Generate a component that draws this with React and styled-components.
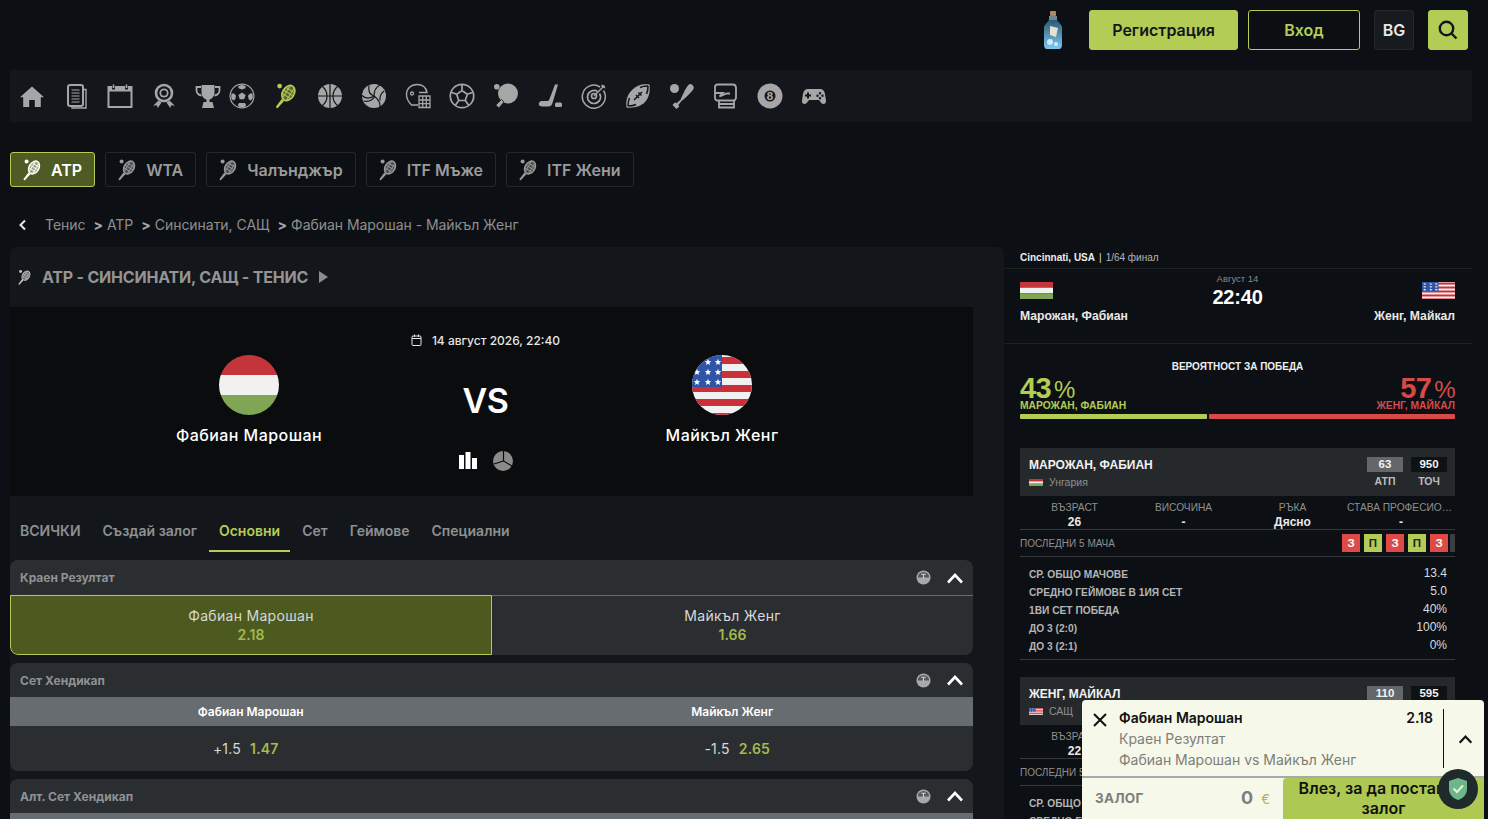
import styled, { createGlobalStyle } from 'styled-components';

const GlobalStyle = createGlobalStyle`
  html, body {
    margin: 0;
    padding: 0;
    height: 100%;
    overflow: hidden;
    background: #0c1014;
    font-family: Inter, "Liberation Sans", sans-serif;
  }
  * { box-sizing: border-box; }
`;

const LIME = '#b3cc55';

const Page = styled.div`
  position: relative;
  width: 100%;
  height: 819px;
  overflow: hidden;
  background: #0c1014;
`;

const TopBar = styled.header`
  height: 70px;
  padding: 10px 20px 0 0;
  display: flex;
  justify-content: flex-end;
  align-items: flex-start;
`;

const Bottle = styled.svg`
  width: 24px;
  height: 38px;
  margin: 1px 24px 0 0;
`;

const TopButton = styled.button`
  width: ${(p) => p.$w}px;
  height: 40px;
  margin-right: ${(p) => p.$mr}px;
  padding: 0;
  display: flex;
  align-items: center;
  justify-content: center;
  border-radius: 3px;
  border: 1px solid ${(p) => p.$border};
  background: ${(p) => p.$bg};
  color: ${(p) => p.$fg};
  font: 600 16px Inter, sans-serif;
`;

const SportNav = styled.nav`
  width: 1462px;
  height: 52px;
  margin: 0 0 0 10px;
  background: #13171b;
  display: flex;
  align-items: center;
`;

const NavItem = styled.span`
  width: 44px;
  height: 30px;
  flex: none;
  margin-right: ${(p) => p.$mr || 0}px;
  display: flex;
  align-items: center;
  justify-content: center;
  color: ${(p) => (p.$active ? LIME : '#a6a6a6')};
  svg { width: 26px; height: 26px; }
`;

const Chips = styled.div`
  margin: 30px 0 0 10px;
  display: flex;
  gap: 10px;
`;

const Chip = styled.div`
  height: 35px;
  padding: 0 12px;
  display: flex;
  align-items: center;
  gap: 10px;
  border-radius: 3px;
  border: 1px solid ${(p) => (p.$active ? LIME : '#24282c')};
  background: ${(p) => (p.$active ? '#4f5b24' : 'transparent')};
  color: ${(p) => (p.$active ? '#fff' : '#9b9b9b')};
  font-size: 16px;
  font-weight: 600;
  svg { width: 18px; height: 22px; }
`;

const Crumbs = styled.div`
  height: 60px;
  padding: 0 0 14px 18px;
  display: flex;
  align-items: flex-end;
  color: #8f8f8f;
  font-size: 14px;
  line-height: 17px;
  letter-spacing: -0.04px;
  svg { width: 9px; height: 12px; margin: 0 18px 2px 0; }
`;

const CrumbSep = styled.b`
  margin: 0 4px 0 8px;
  color: #a8a8a8;
`;

const Columns = styled.div`
  display: flex;
`;

const LeftPanel = styled.main`
  width: 994px;
  height: 572px;
  margin: 0 1px 0 10px;
  padding-right: 31px;
  background: #13171b;
  border-radius: 6px 6px 0 0;
`;

const LeagueTitle = styled.h2`
  height: 60px;
  margin: 0;
  padding-left: 8px;
  display: flex;
  align-items: center;
  color: #949494;
  font-size: 16px;
  font-weight: 700;
  letter-spacing: -0.2px;
  svg { width: 13px; height: 17px; margin-right: 11px; color: #c4c4c4; }
`;

const TitleArrow = styled.i`
  margin-left: 11px;
  border-left: 9px solid #8c8c8c;
  border-top: 6px solid transparent;
  border-bottom: 6px solid transparent;
`;

const Hero = styled.section`
  height: 189px;
  padding-left: 139px;
  display: grid;
  grid-template-columns: 200px 200px 200px;
  column-gap: 36.5px;
  background: #0a0c0e;
  color: #fff;
`;

const Team = styled.div`
  padding-top: 48px;
  display: flex;
  flex-direction: column;
  align-items: center;
  gap: 10px;
  font-size: 16px;
  font-weight: 500;
  line-height: 21px;
  letter-spacing: 0.45px;
  svg { width: 60px; height: 60px; }
`;

const HeroCenter = styled.div`
  display: flex;
  flex-direction: column;
  align-items: center;
`;

const HeroDate = styled.div`
  height: 18px;
  margin-top: 24px;
  display: flex;
  align-items: center;
  gap: 10px;
  font-size: 12px;
  font-weight: 500;
  color: #e6e6e6;
  white-space: nowrap;
  svg { width: 11px; height: 12px; }
`;

const VsMark = styled.div`
  margin-top: 32px;
  font-size: 34px;
  line-height: 40px;
  font-weight: 600;
  letter-spacing: -0.5px;
`;

const HeroIcons = styled.div`
  margin-top: 30px;
  display: flex;
  gap: 15px;
  align-items: center;
  svg { width: 20px; height: 20px; }
`;

const Tabs = styled.div`
  height: 56px;
  margin-bottom: 8px;
  padding-top: 19px;
  display: flex;
  gap: 2px;
`;

const Tab = styled.div`
  height: 37px;
  padding: 0 10px 4px;
  display: flex;
  align-items: center;
  font-size: 14px;
  font-weight: 600;
  color: ${(p) => (p.$active ? LIME : '#8d8f91')};
  border-bottom: 2px solid ${(p) => (p.$active ? LIME : 'transparent')};
`;

const Market = styled.section`
  margin-bottom: 8px;
  background: #2a2e31;
  border-radius: 8px;
  overflow: hidden;
`;

const MarketHead = styled.div`
  height: ${(p) => p.$h}px;
  padding: 0 9px 0 10px;
  display: flex;
  align-items: center;
  color: #8f9295;
  font-size: 12px;
  font-weight: 700;
`;

const Dial = styled.svg`
  width: 15px;
  height: 15px;
  margin-left: auto;
`;

const Caret = styled.svg`
  width: 18px;
  height: 12px;
  margin-left: 15px;
  color: #fff;
`;

const Outcomes = styled.div`
  display: grid;
  grid-template-columns: 482px 1fr;
  border-top: 1px solid #666a6d;
`;

const Outcome = styled.div`
  height: ${(p) => (p.$active ? 60 : 59)}px;
  margin-top: ${(p) => (p.$active ? -1 : 0)}px;
  padding-top: 10px;
  text-align: center;
  font-size: 14px;
  line-height: 19px;
  letter-spacing: 0.3px;
  color: #d6d8d9;
  background: ${(p) => (p.$active ? '#4c5a1f' : 'transparent')};
  border: ${(p) => (p.$active ? `1px solid ${LIME}` : 'none')};
  border-bottom-left-radius: ${(p) => (p.$active ? 8 : 0)}px;
`;

const Odd = styled.div`
  color: #a3ba4c;
  font-weight: 600;
  letter-spacing: 0;
`;

const HandicapHead = styled.div`
  height: 29px;
  display: grid;
  grid-template-columns: 1fr 1fr;
  align-items: center;
  background: #666c6f;
  color: #fff;
  text-align: center;
  font-size: 12px;
  font-weight: 600;
`;

const HandicapRow = styled.div`
  height: 45px;
  display: grid;
  grid-template-columns: 1fr 1fr;
  align-items: center;
  text-align: center;
  font-size: 14px;
  letter-spacing: 0.2px;
  color: #d6d8d9;
  b { margin-left: 9px; color: #a3ba4c; font-weight: 600; }
  div:first-child { padding-right: 10px; }
  div:last-child { padding-left: 10px; }
`;

const Sidebar = styled.aside`
  width: 467px;
  padding: 0 17px 0 15px;
  font-family: "Liberation Sans", Arial, sans-serif;
  color: #fff;
`;

const Bleed = styled.div`
  margin: 0 -17px 0 -15px;
  padding: 0 17px 0 15px;
  border-bottom: 1px solid #1e2225;
`;

const VenueLine = styled.div`
  height: 21px;
  padding-top: 5px;
  font-size: 10px;
  line-height: 12px;
  color: #b5b5b5;
  b { color: #ececec; font-weight: 700; }
  i { margin: 0 4px; font-style: normal; color: #ddd; }
`;

const Matchup = styled.div`
  height: 74px;
  display: grid;
  grid-template-columns: 1fr 1fr 1fr;
`;

const MatchTeam = styled.div`
  padding-top: 13px;
  display: flex;
  flex-direction: column;
  align-items: ${(p) => (p.$right ? 'flex-end' : 'flex-start')};
  gap: 9px;
  font-size: 12.2px;
  font-weight: 700;
  line-height: 16px;
  color: #e8e8e8;
  white-space: nowrap;
  svg { width: 33px; height: 17px; }
`;

const MatchTime = styled.div`
  padding-top: 4px;
  text-align: center;
  font-size: 9.5px;
  line-height: 11px;
  color: #8a8a8a;
  strong { display: block; margin-top: 3px; font-size: 20px; line-height: 20px; color: #fff; letter-spacing: -0.2px; }
`;

const ChanceTitle = styled.div`
  padding-top: 16px;
  text-align: center;
  font-size: 10px;
  font-weight: 700;
  line-height: 14px;
  color: #eee;
`;

const ChanceRow = styled.div`
  margin-top: 1px;
  height: 39px;
  display: flex;
  justify-content: space-between;
`;

const ChanceSide = styled.div`
  display: flex;
  flex-direction: column;
  align-items: ${(p) => (p.$right ? 'flex-end' : 'flex-start')};
  color: ${(p) => p.$color};
`;

const Percent = styled.div`
  height: 25px;
  font-size: 29px;
  line-height: 26px;
  font-weight: 700;
  letter-spacing: -0.6px;
  span { margin-left: 3px; font-size: 24px; font-weight: 400; }
`;

const ChanceName = styled.div`
  font-size: 10.3px;
  line-height: 11px;
  font-weight: 700;
`;

const ChanceBar = styled.div`
  height: 5px;
  margin-bottom: 29px;
  display: flex;
  gap: 2px;
`;

const BarPart = styled.div`
  height: 5px;
  border-radius: 1px;
  background: ${(p) => p.$color};
`;

const PlayerCard = styled.div`
  height: 48px;
  padding: 9px 8px 0 9px;
  display: flex;
  justify-content: space-between;
  background: #26292c;
`;

const PlayerName = styled.div`
  padding-top: 1px;
  font-size: 12px;
  line-height: 15px;
  font-weight: 700;
  color: #f2f2f2;
`;

const Country = styled.div`
  margin-top: 2px;
  display: flex;
  align-items: center;
  gap: 6px;
  font-size: 10.5px;
  line-height: 14px;
  color: #8f8f8f;
  svg { width: 14px; height: 7px; }
`;

const Ranks = styled.div`
  display: flex;
  gap: 8px;
`;

const Rank = styled.div`
  width: 36px;
  text-align: center;
  font-size: 10.5px;
  line-height: 15px;
  font-weight: 700;
  color: #bdbdbd;
  b {
    display: block;
    height: 15px;
    margin-bottom: 2px;
    font-size: 11.500px;
    background: ${(p) => p.$bg};
    color: #f2f2f2;
  }
`;

const Facts = styled.div`
  height: 34px;
  padding-top: 5px;
  display: grid;
  grid-template-columns: 109px 109px 109px 108px;
  border-bottom: 1px solid #34383b;
  text-align: center;
  font-size: 10.2px;
  line-height: 14px;
  color: #8f8f8f;
  b { display: block; font-size: 12px; line-height: 15px; color: #e8e8e8; }
`;

const FactLabel = styled.div`
  white-space: nowrap;
  overflow: hidden;
  text-overflow: ellipsis;
`;

const Form = styled.div`
  height: 27px;
  padding-top: 1px;
  display: flex;
  align-items: center;
  justify-content: space-between;
  border-bottom: 1px solid #34383b;
  font-size: 10px;
  color: #8f8f8f;
`;

const Badges = styled.div`
  display: flex;
  gap: 4px;
  margin-bottom: 2px;
`;

const Badge = styled.span`
  width: 18px;
  height: 18px;
  display: flex;
  align-items: center;
  justify-content: center;
  font-size: 11.5px;
  font-weight: 700;
  background: ${(p) => (p.$win ? LIME : '#de4a48')};
  color: ${(p) => (p.$win ? '#222' : '#fff')};
`;

const BadgeRest = styled.span`
  width: 5px;
  height: 18px;
  margin-left: -2px;
  background: #3b3d40;
`;

const Stats = styled.div`
  padding: 8px 8px 4px 9px;
  margin-bottom: 17px;
  border-bottom: 1px solid #34383b;
`;

const StatRow = styled.div`
  height: 18px;
  display: flex;
  align-items: center;
  justify-content: space-between;
  font-size: 10.2px;
  font-weight: 700;
  color: #b4b4b4;
  b { margin-top: -2px; font-size: 12px; font-weight: 400; color: #dcdcdc; }
`;

const Slip = styled.aside`
  position: absolute;
  left: 1082px;
  top: 700px;
  width: 402px;
  height: 119px;
  background: #f6f8ea;
  border-radius: 4px 4px 0 0;
  overflow: hidden;
`;

const SlipTop = styled.div`
  height: 78px;
  padding: 9px 0 0 10px;
  display: flex;
  border-bottom: 2px solid #a9a9a9;
`;

const SlipClose = styled.svg`
  flex: none;
  width: 16px;
  height: 16px;
  margin: 3px 11px 0 0;
  color: #111;
`;

const SlipInfo = styled.div`
  width: 325px;
  height: 59px;
  padding-right: 10px;
  border-right: 1px solid #111;
  font-size: 14px;
  line-height: 21px;
  color: #7d7e78;
`;

const SlipPick = styled.div`
  margin-top: -2px;
  display: flex;
  justify-content: space-between;
  font-weight: 600;
  color: #111;
`;

const SlipCaret = styled.svg`
  flex: none;
  width: 15px;
  height: 10px;
  margin: 25px 0 0 14px;
`;

const SlipBottom = styled.div`
  height: 39px;
  display: flex;
  align-items: center;
  padding-left: 13px;
  font-weight: 700;
  color: #7d7e78;
`;

const StakeLabel = styled.div`
  width: 146px;
  font-size: 13.5px;
  letter-spacing: 0.3px;
`;

const StakeValue = styled.div`
  width: 42px;
  font-size: 18px;
  span { margin-left: 8px; font-size: 13px; font-weight: 400; color: #a3ba4c; }
`;

const LoginBet = styled.div`
  flex: 1;
  height: 41px;
  margin-top: 2px;
  border-radius: 4px 0 0 0;
  background: #adc853;
  color: #111;
  text-align: center;
  font-size: 16px;
  font-weight: 600;
  line-height: 20px;
  white-space: nowrap;
`;

const ShieldBadge = styled.div`
  position: absolute;
  left: 1438px;
  top: 769px;
  width: 40px;
  height: 40px;
  display: flex;
  align-items: center;
  justify-content: center;
  border-radius: 50%;
  background: #1f2a2a;
  svg { width: 22px; height: 24px; }
`;

const Icon = ({ children, ...rest }) => (
  <svg viewBox="0 0 26 26" fill="currentColor" {...rest}>{children}</svg>
);

const Racket = () => (
  <svg viewBox="0 0 18 22" fill="currentColor">
    <circle cx="3.6" cy="2.6" r="2" />
    <path d="M1.600 21.500L.4 20.200l5-6.700 2 1.800z" />
    <g transform="rotate(32 11 8.500)">
      <ellipse cx="11" cy="8.500" rx="4.900" ry="6.900" fillOpacity="0.45" stroke="currentColor" strokeWidth="1.400" />
      <path d="M7 5.500h8M6.500 8.500h9M7 11.500h8M9 2.500v12M13 2.500v12" stroke="currentColor" strokeWidth="0.800" />
    </g>
  </svg>
);

const HomeIcon = () => <Icon><path d="M13 3.5l12 10.8h-3.2V24h-6v-7h-5.6v7h-6v-9.700H1z" /></Icon>;
const DocsIcon = () => (
  <Icon fill="none" stroke="currentColor">
    <path d="M21 6.500h2V25H9v-1.500" strokeWidth="1.400" />
    <rect x="5" y="2" width="15" height="21" rx="2.200" strokeWidth="2" />
    <path d="M8.500 7h8M8.500 10h8M8.500 13h8M8.500 16h8M8.500 19h8" strokeWidth="1.200" />
  </Icon>
);
const CalendarIcon = () => (
  <Icon fill="none" stroke="currentColor">
    <rect x="1.500" y="4" width="23" height="20" strokeWidth="2" />
    <path d="M1.500 6.500h23" strokeWidth="4" />
    <path d="M6.500 1.500v5M19.500 1.500v5" strokeWidth="2.800" stroke="#13171b" />
    <path d="M6.500 1.500v3.500M19.500 1.500v3.500" strokeWidth="1.600" />
  </Icon>
);
const RosetteIcon = () => (
  <Icon>
    <circle cx="13" cy="10" r="9.300" />
    <circle cx="13" cy="10" r="6.700" fill="#13171b" />
    <circle cx="13" cy="10" r="4.600" />
    <circle cx="13" cy="10" r="2.800" fill="#13171b" />
    <path d="M7.500 17.500l3 2-3.700 5.500-1-2.700-3.600.5zM18.500 17.500l-3 2 3.700 5.500 1-2.700 3.600.5z" />
  </Icon>
);
const TrophyIcon = () => (
  <Icon>
    <path d="M6.500 2h13v7.500c0 3.800-2.600 6.500-5 7.100V19h-3v-2.400c-2.400-.6-5-3.300-5-7.100z" />
    <path d="M6 4H1.500v3c0 3 2 5 5 5.500M20 4h4.500v3c0 3-2 5-5 5.500" fill="none" stroke="currentColor" strokeWidth="1.800" />
    <path d="M8.500 19h9l1.500 6H7z" />
  </Icon>
);
const SoccerIcon = () => (
  <Icon>
    <circle cx="13" cy="13" r="11.900" fill="none" stroke="currentColor" strokeWidth="1.200" />
    <path d="M13 9.500l3.600 2.600-1.400 4.200h-4.400l-1.400-4.200zM13 1.800l3.700 1.500-.3 2L13 6.600 9.600 5.300l-.3-2zM23.500 10.500l.3 4.500-2 2.500-2-1-.8-3.800 2-2.200zM2.500 10.500l-.3 4.500 2 2.500 2-1 .8-3.800-2-2.200zM10 20h6l1.200 2.200-1.700 1.800h-5l-1.700-1.800z" />
  </Icon>
);
const BasketIcon = () => (
  <Icon>
    <circle cx="13" cy="13" r="12" />
    <path d="M13 1v24M1 13h24M5.500 3.500c3 2.500 4.500 5.500 4.500 9.500s-1.500 7-4.500 9.500M20.500 3.500c-3 2.500-4.500 5.500-4.500 9.500s1.500 7 4.500 9.500" fill="none" stroke="#13171b" strokeWidth="1.200" />
  </Icon>
);
const VolleyIcon = () => (
  <Icon>
    <circle cx="13" cy="13" r="12" />
    <path d="M13 13c0-5 2-9 6-11M13 13c-4 2.500-8.500 3-12-.5M13 13c4 3 6.500 7 6 11M8 2.500c-1 5 1 9 5 10.500M2.500 18c4.500 1 9-.5 11.500-5M23 8c-3.500 3-4.500 6-4 9.500" fill="none" stroke="#13171b" strokeWidth="1.200" />
  </Icon>
);
const HelmetIcon = () => (
  <Icon fill="none" stroke="currentColor">
    <path d="M13 22H6.500C3.500 19 1.500 16 1.500 11.500 1.500 5.500 6 1.500 12 1.500c5 0 9 2.800 10 8H14" strokeWidth="1.400" />
    <circle cx="7" cy="10.500" r="1.500" strokeWidth="1.300" />
    <path d="M14 13h11v11.500H14zM14 17h11M14 20.700h11M17.700 13v11.500M21.300 13v11.500" strokeWidth="1.300" />
  </Icon>
);
const StarBallIcon = () => (
  <Icon fill="none" stroke="currentColor" strokeWidth="1.700">
    <circle cx="13" cy="13" r="11.700" />
    <path d="M13 7.500l5.300 3.800-2 6.200H9.700l-2-6.200zM13 1.500v6M18.300 11.300l5.700-2M16.300 17.500l3.500 5M9.700 17.500l-3.500 5M7.700 11.300L2 9.300" />
  </Icon>
);
const PaddleIcon = () => (
  <Icon>
    <circle cx="3.800" cy="3.800" r="2.800" />
    <circle cx="15" cy="10.500" r="10" />
    <path d="M8.500 16.500l2.600 2.600-5.300 6-3-3z" stroke="#13171b" strokeWidth="0.800" />
  </Icon>
);
const HockeyIcon = () => (
  <Icon>
    <path d="M18 1.500h3l-5.500 18.500c-.5 2-2 3.500-4 3.500H5c-2 0-3.200-1-3.200-2.500s1.200-3 3.200-3h5c1.300 0 2-.6 2.500-2z" />
    <rect x="18" y="19.500" width="7" height="4.500" rx="1.500" />
  </Icon>
);
const TargetIcon = () => (
  <Icon fill="none" stroke="currentColor">
    <path d="M19 4a11.500 11.500 0 1 0 3.500 3.500" strokeWidth="1.500" />
    <path d="M16.500 8.500a6.500 6.500 0 1 0 2 2" strokeWidth="1.700" />
    <circle cx="13" cy="13" r="2.500" strokeWidth="1.700" />
    <path d="M13 13l10-10" strokeWidth="1.500" />
    <path d="M20.500 1.500l3 1 1 3-2.500-1-1.500-.5z" fill="currentColor" stroke="none" />
  </Icon>
);
const RugbyIcon = () => (
  <Icon>
    <path d="M24.500 1.500c1 8-1 13.500-4.500 17.500S9 25.500 1.500 24.500C.5 17 2.500 11.500 7 7S16.500.5 24.500 1.500z" />
    <path d="M23 3c-3.500 0-6 .5-8 1.500M21.500 11c1-2 1.500-4.500 1.500-8M3 23c3.500 0 6-.5 8-1.500M4.500 15c-1 2-1.500 4.500-1.500 8" fill="none" stroke="#13171b" strokeWidth="1.600" />
    <path d="M9 17l8-8M11 12l3 3M13.500 9.500l3 3" fill="none" stroke="#13171b" strokeWidth="1.500" />
  </Icon>
);
const BatIcon = () => (
  <Icon>
    <circle cx="5.500" cy="5.500" r="4.500" />
    <path d="M20.500 1.200c2-.8 5 2.200 4.200 4.200-1.200 2.800-7 8.400-12.200 12.600l-3.200 4 1 1.600-2.700 2.400-4.100-4 2.400-2.600 1.600.9 3.800-3.300C14 11.400 17.500 2.600 20.500 1.200z" />
  </Icon>
);
const GloveIcon = () => (
  <Icon fill="none" stroke="currentColor" strokeWidth="1.800">
    <path d="M6 17.500H4.500c-1.500 0-2.500-1-2.500-2.500V4c0-1.500 1-2.500 2.500-2.500h15c2 0 3.500 1.500 3.500 3.500v9.500c0 2-1.500 3-2.500 3z" />
    <path d="M2 10h8l-3.500 3.500L14 10.500h3" />
    <path d="M6 17.500v7h15v-7M6 21h15" />
  </Icon>
);
const EightIcon = () => (
  <Icon>
    <circle cx="13" cy="13" r="12.500" />
    <circle cx="13" cy="13" r="5.500" fill="#13171b" />
    <text x="13" y="16.800" textAnchor="middle" fontSize="10.500" fontWeight="700" fill="#a6a6a6">8</text>
  </Icon>
);
const PadIcon = () => (
  <Icon>
    <path fillRule="evenodd" d="M7 6h12c2.800 0 4.300 1.800 5 5l1 6.500c.3 2-.8 3.500-2.500 3.500-1.300 0-2.200-.8-3-2L18 17H8l-1.500 2c-.8 1.200-1.700 2-3 2C1.800 21 .7 19.500 1 17.500L2 11c.7-3.200 2.200-5 5-5zM6 9.500v2H4v2h2v2h2v-2h2v-2H8v-2zM19 9a1.200 1.200 0 1 0 0 2.400A1.200 1.200 0 0 0 19 9zm-2.500 2.500a1.200 1.200 0 1 0 0 2.400 1.200 1.200 0 0 0 0-2.400zm5 0a1.200 1.200 0 1 0 0 2.400 1.200 1.200 0 0 0 0-2.400zM19 14a1.200 1.200 0 1 0 0 2.400 1.200 1.200 0 0 0 0-2.400z" />
  </Icon>
);

const HuFlag = ({ round }) => (
  <svg viewBox="0 0 60 60" preserveAspectRatio="none">
    <defs><clipPath id="hu-round"><circle cx="30" cy="30" r="30" /></clipPath></defs>
    <g clipPath={round ? 'url(#hu-round)' : undefined}>
      <rect width="60" height="20" fill="#c4343b" />
      <rect y="20" width="60" height="20" fill="#f1f1f1" />
      <rect y="40" width="60" height="20" fill="#80a655" />
    </g>
  </svg>
);

const UsFlag = ({ round }) => (
  <svg viewBox="0 0 60 60" preserveAspectRatio="none">
    <defs><clipPath id="us-round"><circle cx="30" cy="30" r="30" /></clipPath></defs>
    <g clipPath={round ? 'url(#us-round)' : undefined}>
      <rect width="60" height="60" fill="#f1f1f1" />
      {[0, 14, 28, 42, 56].map((y) => <rect key={y} y={y + 2} width="60" height="7" fill="#c9303a" />)}
      <rect width="30" height="32" fill="#2f55a8" />
      {[7, 17, 27].map((y) => [5, 16, 26].map((x) => (
        <path
          key={`${x}-${y}`}
          transform={`translate(${x} ${y})`}
          d="M0-3.200l.9 2.200 2.300.2-1.800 1.500.6 2.300L0 1.800-2 3l.6-2.300-1.800-1.500 2.300-.2z"
          fill="#fff"
        />
      )))}
    </g>
  </svg>
);

const ScoreDial = () => (
  <Dial viewBox="0 0 16 16">
    <circle cx="8" cy="8" r="7.500" fill="#a8a8a8" />
    <path d="M2 8a6 6 0 0 1 12 0z" fill="#55595c" />
    <path d="M5.500 4.500h5M8 4.500V9" stroke="#cfcfcf" strokeWidth="1.200" />
  </Dial>
);

const CaretUp = () => (
  <Caret viewBox="0 0 18 12" fill="none" stroke="currentColor" strokeWidth="2.600">
    <path d="M2 10.500L9 3l7 7.500" />
  </Caret>
);

const sports = [
  { Glyph: HomeIcon },
  { Glyph: DocsIcon },
  { Glyph: CalendarIcon },
  { Glyph: RosetteIcon },
  { Glyph: TrophyIcon, mr: -10 },
  { Glyph: SoccerIcon },
  { Glyph: Racket, active: true },
  { Glyph: BasketIcon },
  { Glyph: VolleyIcon },
  { Glyph: HelmetIcon },
  { Glyph: StarBallIcon },
  { Glyph: PaddleIcon },
  { Glyph: HockeyIcon },
  { Glyph: TargetIcon },
  { Glyph: RugbyIcon },
  { Glyph: BatIcon },
  { Glyph: GloveIcon },
  { Glyph: EightIcon },
  { Glyph: PadIcon },
];

const chips = ['ATP', 'WTA', 'Чалънджър', 'ITF Мъже', 'ITF Жени'];
const tabs = ['ВСИЧКИ', 'Създай залог', 'Основни', 'Сет', 'Геймове', 'Специални'];

const players = [
  {
    name: 'МАРОЖАН, ФАБИАН',
    country: 'Унгария',
    Flag: HuFlag,
    rank: '63',
    points: '950',
    facts: ['26', '-', 'Дясно', '-'],
    form: [false, true, false, true, false],
    stats: ['13.4', '5.0', '40%', '100%', '0%'],
  },
  {
    name: 'ЖЕНГ, МАЙКАЛ',
    country: 'САЩ',
    Flag: UsFlag,
    rank: '110',
    points: '595',
    facts: ['22', '-', 'Дясно', '-'],
    form: [true, false, true, false, true],
    stats: ['12.8', '4.8', '60%', '50%', '50%'],
  },
];

const factLabels = ['ВЪЗРАСТ', 'ВИСОЧИНА', 'РЪКА', 'СТАВА ПРОФЕСИОНАЛИСТ'];
const statLabels = ['СР. ОБЩО МАЧОВЕ', 'СРЕДНО ГЕЙМОВЕ В 1ИЯ СЕТ', '1ВИ СЕТ ПОБЕДА', 'ДО 3 (2:0)', 'ДО 3 (2:1)'];

const PlayerBlock = ({ player }) => {
  const { Flag } = player;
  return (
    <>
      <PlayerCard>
        <div>
          <PlayerName>{player.name}</PlayerName>
          <Country><Flag />{player.country}</Country>
        </div>
        <Ranks>
          <Rank $bg="#63676a"><b>{player.rank}</b>АТП</Rank>
          <Rank $bg="#0f1113"><b>{player.points}</b>ТОЧ</Rank>
        </Ranks>
      </PlayerCard>
      <Facts>
        {factLabels.map((label, i) => (
          <div key={label}>
            <FactLabel>{label}</FactLabel>
            <b>{player.facts[i]}</b>
          </div>
        ))}
      </Facts>
      <Form>
        ПОСЛЕДНИ 5 МАЧА
        <Badges>
          {player.form.map((win, i) => <Badge key={i} $win={win}>{win ? 'П' : 'З'}</Badge>)}
          <BadgeRest />
        </Badges>
      </Form>
      <Stats>
        {statLabels.map((label, i) => (
          <StatRow key={label}>{label}<b>{player.stats[i]}</b></StatRow>
        ))}
      </Stats>
    </>
  );
};

const App = () => {
  return (
    <Page>
      <GlobalStyle />
      <TopBar>
        <Bottle viewBox="0 0 24 38">
          <defs>
            <linearGradient id="bottle-glass" x1="0" y1="0" x2="0" y2="1">
              <stop offset="0" stopColor="#2b5a74" />
              <stop offset="1" stopColor="#7fc8f0" />
            </linearGradient>
          </defs>
          <rect x="9" y="0" width="6" height="5" rx="1" fill="#a98a66" />
          <rect x="8" y="5" width="8" height="4" fill="#6e8592" />
          <path d="M8 9h8l4 5c1 1 1 2 1 3v17c0 2-1 4-3 4H6c-2 0-3-2-3-4V17c0-1 0-2 1-3z" fill="url(#bottle-glass)" />
          <path d="M9 15l8 2-2 9-6-2z" fill="#e4e0d2" />
          <circle cx="9" cy="31" r="3" fill="#c9ecff" />
          <circle cx="15" cy="33" r="2" fill="#c9ecff" />
        </Bottle>
        <TopButton $w={149} $mr={10} $bg={LIME} $border={LIME} $fg="#13161a">Регистрация</TopButton>
        <TopButton $w={112} $mr={14} $bg="#0c0f12" $border={LIME} $fg={LIME}>Вход</TopButton>
        <TopButton $w={40} $mr={14} $bg="#171a1e" $border="#24282c" $fg="#e8e8e8">BG</TopButton>
        <TopButton $w={40} $mr={0} $bg={LIME} $border={LIME} $fg="#13161a">
          <svg viewBox="0 0 20 20" width="20" height="20" fill="none" stroke="currentColor" strokeWidth="2.400">
            <circle cx="8.500" cy="8.500" r="6.700" />
            <path d="M13.500 13.500l5 5" />
          </svg>
        </TopButton>
      </TopBar>

      <SportNav>
        {sports.map(({ Glyph, active, mr }, i) => (
          <NavItem key={i} $active={active} $mr={mr}><Glyph /></NavItem>
        ))}
      </SportNav>

      <Chips>
        {chips.map((chip, i) => (
          <Chip key={chip} $active={i === 0}><Racket />{chip}</Chip>
        ))}
      </Chips>

      <Crumbs>
        <svg viewBox="0 0 9 12" fill="none" stroke="#e6e6e6" strokeWidth="2"><path d="M7 1.500L2.500 6 7 10.500" /></svg>
        Тенис<CrumbSep>&gt;</CrumbSep>ATP<CrumbSep>&gt;</CrumbSep>Синсинати, САЩ<CrumbSep>&gt;</CrumbSep>Фабиан Марошан - Майкъл Женг
      </Crumbs>

      <Columns>
        <LeftPanel>
          <LeagueTitle><Racket />ATP - СИНСИНАТИ, САЩ - ТЕНИС<TitleArrow /></LeagueTitle>

          <Hero>
            <Team><HuFlag round />Фабиан Марошан</Team>
            <HeroCenter>
              <HeroDate>
                <svg viewBox="0 0 11 12" fill="none" stroke="currentColor" strokeWidth="1">
                  <rect x="1" y="2" width="9" height="9.500" rx="1" />
                  <path d="M1 4.500h9M3.500 .5v2.500M7.500 .5v2.500" />
                </svg>
                14 август 2026, 22:40
              </HeroDate>
              <VsMark>VS</VsMark>
              <HeroIcons>
                <svg viewBox="0 0 20 20" fill="#fff"><path d="M1 4h5v14H1zM7.500 1h5v17h-5zM14 7h5v11h-5z" /></svg>
                <svg viewBox="0 0 20 20" fill="#8a8a8a">
                  <circle cx="10" cy="10" r="10" />
                  <path d="M10.500 0v10l8.500 5M10.500 10L1 13" stroke="#0a0c0e" strokeWidth="1.200" fill="none" />
                </svg>
              </HeroIcons>
            </HeroCenter>
            <Team><UsFlag round />Майкъл Женг</Team>
          </Hero>

          <Tabs>
            {tabs.map((tab) => <Tab key={tab} $active={tab === 'Основни'}>{tab}</Tab>)}
          </Tabs>

          <Market>
            <MarketHead $h={35}>Краен Резултат<ScoreDial /><CaretUp /></MarketHead>
            <Outcomes>
              <Outcome $active>Фабиан Марошан<Odd>2.18</Odd></Outcome>
              <Outcome>Майкъл Женг<Odd>1.66</Odd></Outcome>
            </Outcomes>
          </Market>

          <Market>
            <MarketHead $h={34}>Сет Хендикап<ScoreDial /><CaretUp /></MarketHead>
            <HandicapHead><div>Фабиан Марошан</div><div>Майкъл Женг</div></HandicapHead>
            <HandicapRow>
              <div>+1.5<b>1.47</b></div>
              <div>-1.5<b>2.65</b></div>
            </HandicapRow>
          </Market>

          <Market>
            <MarketHead $h={34}>Алт. Сет Хендикап<ScoreDial /><CaretUp /></MarketHead>
            <HandicapHead />
          </Market>
        </LeftPanel>

        <Sidebar>
          <Bleed>
            <VenueLine><b>Cincinnati, USA</b><i>|</i>1/64 финал</VenueLine>
          </Bleed>
          <Bleed>
            <Matchup>
              <MatchTeam><HuFlag />Марожан, Фабиан</MatchTeam>
              <MatchTime>Август 14<strong>22:40</strong></MatchTime>
              <MatchTeam $right><UsFlag />Женг, Майкал</MatchTeam>
            </Matchup>
          </Bleed>
          <ChanceTitle>ВЕРОЯТНОСТ ЗА ПОБЕДА</ChanceTitle>
          <ChanceRow>
            <ChanceSide $color={LIME}>
              <Percent>43<span>%</span></Percent>
              <ChanceName>МАРОЖАН, ФАБИАН</ChanceName>
            </ChanceSide>
            <ChanceSide $right $color="#d8494a">
              <Percent>57<span>%</span></Percent>
              <ChanceName>ЖЕНГ, МАЙКАЛ</ChanceName>
            </ChanceSide>
          </ChanceRow>
          <ChanceBar>
            <BarPart $color={LIME} style={{ width: '43%' }} />
            <BarPart $color="#d8494a" style={{ flex: 1 }} />
          </ChanceBar>
          {players.map((player) => <PlayerBlock key={player.name} player={player} />)}
        </Sidebar>
      </Columns>

      <Slip>
        <SlipTop>
          <SlipClose viewBox="0 0 16 16" fill="none" stroke="currentColor" strokeWidth="2"><path d="M2 2l12 12M14 2L2 14" /></SlipClose>
          <SlipInfo>
            <SlipPick><span>Фабиан Марошан</span><span>2.18</span></SlipPick>
            <div>Краен Резултат</div>
            <div>Фабиан Марошан vs Майкъл Женг</div>
          </SlipInfo>
          <SlipCaret viewBox="0 0 18 12" fill="none" stroke="#111" strokeWidth="2.600">
            <path d="M2 10.500L9 3l7 7.500" />
          </SlipCaret>
        </SlipTop>
        <SlipBottom>
          <StakeLabel>ЗАЛОГ</StakeLabel>
          <StakeValue>0<span>€</span></StakeValue>
          <LoginBet>Влез, за да поставиш<br />залог</LoginBet>
        </SlipBottom>
      </Slip>
      <ShieldBadge>
        <svg viewBox="0 0 22 24">
          <path d="M11 1l9 3v8c0 5.500-4 9.500-9 11-5-1.500-9-5.500-9-11V4z" fill="#6fb58a" />
          <path d="M6.500 11.500l3.500 3.500 6-6.500" fill="none" stroke="#dff3e2" strokeWidth="2" />
        </svg>
      </ShieldBadge>
    </Page>
  );
};

export default App;
